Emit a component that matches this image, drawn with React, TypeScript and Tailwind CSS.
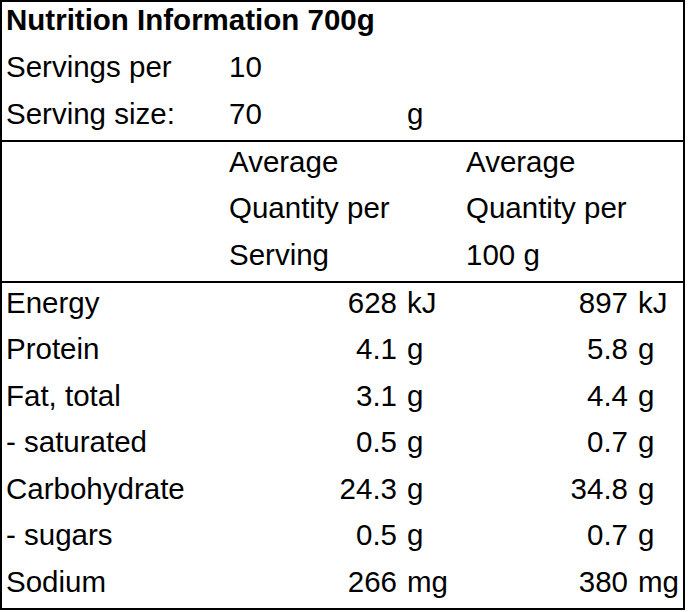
import React from 'react';

type Row = { label: string; a: string; aUnit: string; b: string; bUnit: string };

const rows: Row[] = [
  { label: 'Energy', a: '628', aUnit: 'kJ', b: '897', bUnit: 'kJ' },
  { label: 'Protein', a: '4.1', aUnit: 'g', b: '5.8', bUnit: 'g' },
  { label: 'Fat, total', a: '3.1', aUnit: 'g', b: '4.4', bUnit: 'g' },
  { label: '- saturated', a: '0.5', aUnit: 'g', b: '0.7', bUnit: 'g' },
  { label: 'Carbohydrate', a: '24.3', aUnit: 'g', b: '34.8', bUnit: 'g' },
  { label: '- sugars', a: '0.5', aUnit: 'g', b: '0.7', bUnit: 'g' },
  { label: 'Sodium', a: '266', aUnit: 'mg', b: '380', bUnit: 'mg' },
];

const cols = 'grid grid-cols-[221px_179px_58px_173px_50px]';
const cell = 'pl-[6px] pr-[5px] whitespace-nowrap';
const label = 'pl-[4px] whitespace-nowrap';
const unit = 'pl-[5px] whitespace-nowrap';

export default function App() {
  return (
    <div className="bg-white w-[688px] h-[612px] text-black text-[29.5px] leading-[30px] font-['Liberation_Sans',Arial,sans-serif]">
      <div className="w-[685px] h-[610px] border-2 border-black flex flex-col">
        {/* Title and servings */}
        <div className={`${cols} grid-rows-3 h-[140px] border-b-2 border-black`}>
          <div className={`${label} pt-[3px] col-span-5 font-bold`}>Nutrition Information 700g</div>
          <div className={`${label} pt-[4px]`}>Servings per</div>
          <div className={`${cell} pt-[4px] col-span-4`}>10</div>
          <div className={`${label} pt-[5px]`}>Serving size:</div>
          <div className={`${cell} pt-[5px]`}>70</div>
          <div className={`${unit} pt-[5px] col-span-3`}>g</div>
        </div>

        {/* Column headings */}
        <div className={`${cols} grid-rows-3 h-[141px] border-b-2 border-black`}>
          <div className="row-span-3" />
          <div className={`${cell} pt-[5px] col-span-2`}>Average</div>
          <div className={`${cell} pt-[5px] col-span-2`}>Average</div>
          <div className={`${cell} pt-[5px] col-span-2`}>Quantity per</div>
          <div className={`${cell} pt-[5px] col-span-2`}>Quantity per</div>
          <div className={`${cell} pt-[5px] col-span-2`}>Serving</div>
          <div className={`${cell} pt-[5px] col-span-2`}>100 g</div>
        </div>

        {/* Nutrients */}
        <div className={`${cols} grid-rows-7 h-[325px]`}>
          {rows.map((r) => (
            <React.Fragment key={r.label}>
              <div className={`${label} pt-[5px]`}>{r.label}</div>
              <div className={`${cell} pt-[5px] text-right`}>{r.a}</div>
              <div className={`${unit} pt-[5px]`}>{r.aUnit}</div>
              <div className={`${cell} pt-[5px] text-right`}>{r.b}</div>
              <div className={`${unit} pt-[5px]`}>{r.bUnit}</div>
            </React.Fragment>
          ))}
        </div>
      </div>
    </div>
  );
}
